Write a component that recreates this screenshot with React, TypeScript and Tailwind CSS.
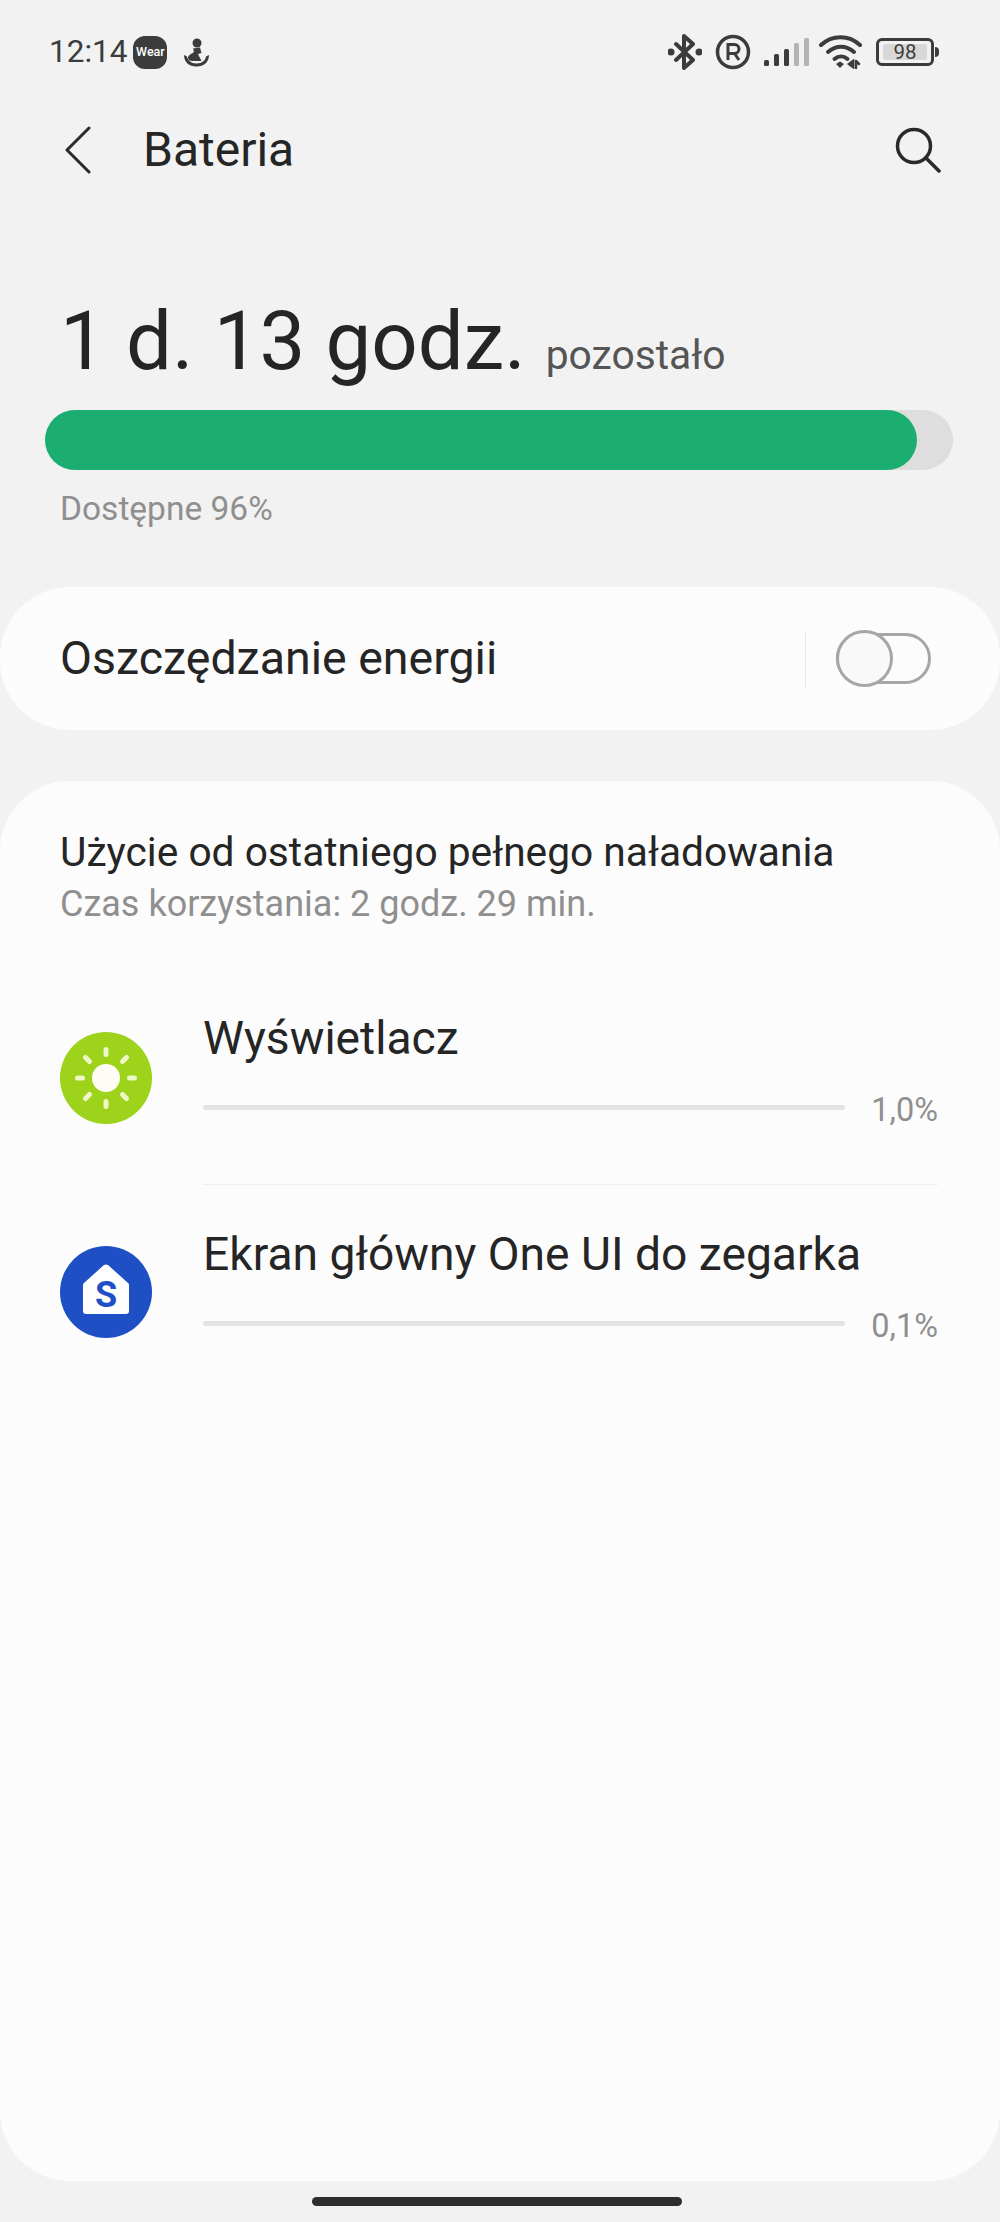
const font = { fontFamily: 'Roboto, sans-serif' };

function StatusBar() {
  return (
    <div className="flex h-[104px] items-center justify-between pl-[49px] pr-[61px] text-[#3c3c3c]">
      <div className="flex items-center">
        <span className="text-[31.5px] leading-none">12:14</span>
        <div className="ml-[6px] flex h-[33px] w-[34px] items-center justify-center rounded-[12px] bg-[#3c3c3c]">
          <span className="text-[12.5px] font-medium leading-none text-white">Wear</span>
        </div>
        <svg className="ml-[17px]" width="25" height="29" viewBox="0 0 25 29" fill="#3c3c3c">
          <circle cx="13" cy="5" r="4.500" />
          <path d="M9 10.500 16 9.500l1.500 5.500-3.500 1 3.500 7H8c-2 0-4-1-4-3 0-3 4-4.500 6-6z" />
          <path d="M0 17c0 7 5 11.500 12.500 11.500S25 24 25 17l-3 1.500c-.5 4-4 7-9.500 7S3.500 22 3 18.500z" />
        </svg>
      </div>
      <div className="flex items-center">
        <svg width="34" height="36" viewBox="0 0 34 36" fill="none" stroke="#3c3c3c" strokeWidth="4" strokeLinejoin="round" strokeLinecap="round">
          <path d="M8 10 25 26 16 34V2l9 8L8 26" />
          <circle cx="3" cy="18" r="1.500" fill="#3c3c3c" />
          <circle cx="31" cy="18" r="1.500" fill="#3c3c3c" />
        </svg>
        <svg className="ml-[13px]" width="36" height="36" viewBox="0 0 36 36" fill="none" stroke="#3c3c3c" strokeWidth="3.500">
          <circle cx="18" cy="18" r="15.500" />
          <path d="M13 26V10.500h6.500a4.500 4.500 0 0 1 0 9H13M19.500 19.500 24 26" strokeWidth="3" />
        </svg>
        <svg className="ml-[12px]" width="46" height="30" viewBox="0 0 46 30">
          <rect x="1" y="23" width="5" height="6" rx="1.500" fill="#3c3c3c" />
          <rect x="11" y="17" width="5" height="12" rx="1.500" fill="#3c3c3c" />
          <rect x="21" y="12" width="5" height="17" rx="1.500" fill="#3c3c3c" />
          <rect x="31" y="6" width="5" height="23" rx="1.500" fill="#b4b4b4" />
          <rect x="41" y="1" width="5" height="28" rx="1.500" fill="#b4b4b4" />
        </svg>
        <svg className="ml-[10px]" width="44" height="34" viewBox="0 0 44 34" fill="none" stroke="#3c3c3c" strokeWidth="4" strokeLinecap="round">
          <path d="M2 10C13-.5 30-.5 41 10" />
          <path d="M9 17c8-7 18-7 26 0" />
          <path d="M15.500 24c4-3.500 9-3.500 13 0" />
          <path d="M21 33l-4-4 4-2.500 4 2.500z" fill="#3c3c3c" stroke="none" />
          <path d="M34 26l-4 3 4 3zM37 26v7M37 26l3 3" fill="#3c3c3c" strokeWidth="2.500" />
        </svg>
        <div className="ml-[13px] flex h-[28px] w-[58px] items-center justify-center rounded-[6px] border-[3px] border-[#3c3c3c]">
          <div className="flex h-[16px] w-[44px] items-center justify-center rounded-[2px] bg-[#d8d8d8]">
            <span className="text-[20.5px] leading-none">98</span>
          </div>
        </div>
        <div className="ml-[1px] h-[10px] w-[4px] rounded-r-full bg-[#3c3c3c]" />
      </div>
    </div>
  );
}

function Header() {
  return (
    <div className="flex h-[92px] items-center justify-between pl-[65px] pr-[59px] text-[#252525]">
      <div className="flex items-center">
        <svg width="26" height="48" viewBox="0 0 26 48" fill="none" stroke="#2a2a2a" strokeWidth="3" strokeLinecap="round" strokeLinejoin="round">
          <path d="M24 2 2 24l22 22" />
        </svg>
        <span className="ml-[52px] text-[48px] leading-none">Bateria</span>
      </div>
      <svg width="46" height="46" viewBox="0 0 46 46" fill="none" stroke="#2a2a2a" strokeWidth="3.500" strokeLinecap="round">
        <circle cx="19" cy="19" r="16.500" />
        <path d="M31 31 44 44" />
      </svg>
    </div>
  );
}

function UsageRow({ icon, iconTop, title, value }: { icon: React.ReactNode; iconTop: string; title: string; value: string }) {
  return (
    <div className="flex items-start">
      <div className={iconTop}>{icon}</div>
      <div className="ml-[51px] flex-1">
        <div className="text-[46.2px] leading-[52px] text-[#252525]">{title}</div>
        <div className="mt-[30px] flex items-start">
          <div className="mt-[11px] h-[5px] w-[642px] rounded-full bg-[#e4e4e4]" />
          <span className="ml-auto text-[32.5px] leading-[32px] text-[#8f8f8f]">{value}</span>
        </div>
      </div>
    </div>
  );
}

export default function App() {
  return (
    <div className="relative h-[2222px] w-[1000px] overflow-hidden bg-[#f2f2f2]" style={font}>
      <StatusBar />
      <Header />

      <div className="pl-[60px] pt-[100px]">
        <span className="text-[81.5px] leading-[90px] text-[#252525]">1 d. 13 godz.</span>
        <span className="ml-[20px] text-[40.8px] text-[#555555]">pozostało</span>
      </div>

      <div className="ml-[45px] mr-[47px] mt-[24px] h-[60px] rounded-full bg-[#dedede]">
        <div className="h-full w-[872px] rounded-full bg-[#1cae70]" />
      </div>
      <div className="ml-[60px] mt-[21px] text-[33.5px] leading-[36px] text-[#8f8f8f]">Dostępne 96%</div>

      <div className="mt-[60px] flex h-[143px] items-center rounded-[70px] bg-[#fcfcfc] pl-[60px] pr-[69px]">
        <span className="text-[46.5px] leading-none text-[#252525]">Oszczędzanie energii</span>
        <div className="ml-auto h-[56px] w-px bg-[#e8e8e8]" />
        <div className="relative ml-[30px] h-[51px] w-[95px] rounded-full border-[3px] border-[#a6a6a6]">
          <div className="absolute left-[-3px] top-[-6px] h-[57px] w-[57px] rounded-full border-[3px] border-[#a6a6a6] bg-[#f9f9f9]" />
        </div>
      </div>

      <div className="mt-[51px] h-[1400px] rounded-[70px] bg-[#fcfcfc] pl-[60px] pr-[62px] pt-[48px]">
        <div className="text-[40.7px] leading-[46px] text-[#252525]">Użycie od ostatniego pełnego naładowania</div>
        <div className="mt-[10px] text-[36px] leading-[38px] text-[#8f8f8f]">Czas korzystania: 2 godz. 29 min.</div>

        <div className="mt-[89px]">
          <UsageRow
            title="Wyświetlacz"
            value="1,0%"
            iconTop="mt-[20px]"
            icon={
              <svg width="92" height="92" viewBox="0 0 92 92">
                <circle cx="46" cy="46" r="46" fill="#9dd31a" />
                <circle cx="46" cy="46" r="14" fill="#fdfdf5" />
                <g stroke="#eef7c8" strokeWidth="5" strokeLinecap="round">
                  <path d="M46 17.500v5M46 69.500v5M17.500 46h5M69.500 46h5M25.500 25.500l4 4M62.500 62.500l4 4M25.500 66.500l4-4M62.500 29.500l4-4" />
                </g>
              </svg>
            }
          />
          <div className="ml-[143px] mt-[58px] h-px bg-[#f0f0f0]" />
          <div className="mt-[43px]">
            <UsageRow
              title="Ekran główny One UI do zegarka"
              value="0,1%"
              iconTop="mt-[18px]"
              icon={
                <svg width="92" height="92" viewBox="0 0 92 92">
                  <circle cx="46" cy="46" r="46" fill="#1f4fc4" />
                  <path d="M23 39a3 3 0 0 1 1.500-2.500L44 19a4 4 0 0 1 4 0l19.500 17.500A3 3 0 0 1 69 39v26a3 3 0 0 1-3 3H26a3 3 0 0 1-3-3z" fill="#ffffff" />
                  <text x="46" y="60.500" textAnchor="middle" fontSize="36" fontWeight="700" fill="#1f4fc4" fontFamily="Roboto, sans-serif">S</text>
                </svg>
              }
            />
          </div>
        </div>
      </div>

      <div className="mx-auto mt-[16px] h-[9px] w-[370px] translate-x-[-3px] rounded-full bg-[#2e2e2e]" />
    </div>
  );
}
